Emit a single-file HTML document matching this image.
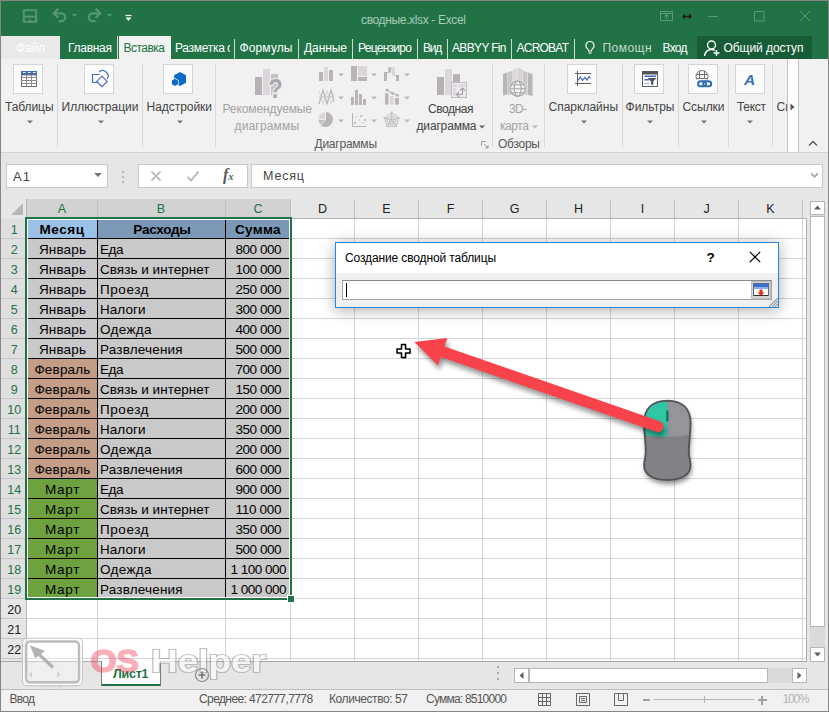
<!DOCTYPE html>
<html lang="ru"><head><meta charset="utf-8"><title>Excel</title><style>html,body{margin:0;padding:0}
body{width:829px;height:712px;overflow:hidden;position:relative;background:#e6e6e6;font-family:"Liberation Sans",sans-serif;}
.a{position:absolute;box-sizing:border-box}
.t{position:absolute;white-space:nowrap;display:block}
.c{position:absolute;white-space:nowrap;display:block;text-align:center}
</style></head><body>
<div class="a" style="left:0px;top:0px;width:829px;height:712px;background:#858585;"></div>
<div class="a" style="left:1px;top:1px;width:827px;height:710px;background:#e6e6e6;"></div>
<div class="a" style="left:1px;top:1px;width:827px;height:58px;background:#217346;"></div>
<span class="t" style="left:361px;top:12.3px;font-size:12px;line-height:16px;color:#aacbb7;letter-spacing:-0.35px;">сводные.xlsx - Excel</span>
<svg class="a" style="left:0;top:0" width="829" height="36" viewBox="0 0 829 36">
<g fill="none" stroke="#56976f" stroke-width="2">
<path d="M23.800 10.300h12.400v11.400h-12.400z"/><path d="M24 16.600h12"/><path d="M30 19.500v2.500"/>
</g>
<g fill="none" stroke="#56976f" stroke-width="2.200" stroke-linecap="butt" stroke-linejoin="miter">
<path d="M54 13.300h7.300a3.900 3.900 0 0 1 0 7.800h-2.800"/><path d="M58.300 8.800l-4.600 4.500 4.600 4.500"/>
<path d="M100 13.300h-7.300a3.900 3.900 0 0 0 0 7.800h2.800"/><path d="M95.700 8.800l4.600 4.500-4.600 4.500"/>
</g>
<path d="M72 14h5l-2.500 3z" fill="#56976f"/><path d="M107 14h5l-2.500 3z" fill="#56976f"/>
<path d="M125.5 15.500h6" stroke="#fff" stroke-width="1.200"/><path d="M125.500 17.500h6l-3 3.500z" fill="#fff"/>
<g fill="none" stroke="#5c9a78" stroke-width="1">
<path d="M660.5 11.500h12v9h-12z"/><path d="M660.5 13.500h12"/><path d="M666.5 19v-4.500M664.500 16.500l2-2 2 2"/>
<path d="M708 16.500h10"/><path d="M754.500 11.500h9.500v9.500h-9.500z"/><path d="M800 11l10 10M810 11l-10 10"/>
</g>
<path d="M682 16.500l3-3v2.300h4v-2.300l3 3-3 3v-2.300h-4v2.300z" fill="#1a1a1a"/>
</svg>
<div class="a" style="left:1px;top:36px;width:59px;height:23px;background:#e9e9e9;"></div>
<span class="t" style="left:16px;top:39.7px;font-size:12px;line-height:16px;color:#ffffff;letter-spacing:-0.17px;">Файл</span>
<span class="t" style="left:68px;top:39.7px;font-size:12px;line-height:16px;color:#fff;letter-spacing:-0.28px;">Главная</span>
<div class="a" style="left:117px;top:36px;width:1px;height:23px;background:#d4e3da;"></div>
<div class="a" style="left:119px;top:36px;width:52px;height:24px;background:#f1f1f1;"></div>
<span class="t" style="left:123.5px;top:39.7px;font-size:12px;line-height:16px;color:#217346;letter-spacing:-0.52px;">Вставка</span>
<span class="t" style="left:175px;top:39.7px;font-size:12px;line-height:16px;color:#fff;letter-spacing:-0.26px;">Разметка</span>
<span class="t" style="left:227px;top:39.7px;font-size:12px;line-height:16px;color:#fff;letter-spacing:-1.20px;width:3px;overflow:hidden;">с</span>
<div class="a" style="left:234px;top:39px;width:1px;height:20px;background:#c9ddd1;"></div>
<div class="a" style="left:298px;top:39px;width:1px;height:20px;background:#c9ddd1;"></div>
<div class="a" style="left:352px;top:39px;width:1px;height:20px;background:#c9ddd1;"></div>
<div class="a" style="left:417px;top:39px;width:1px;height:20px;background:#c9ddd1;"></div>
<div class="a" style="left:447px;top:39px;width:1px;height:20px;background:#c9ddd1;"></div>
<div class="a" style="left:511px;top:39px;width:1px;height:20px;background:#c9ddd1;"></div>
<div class="a" style="left:574px;top:39px;width:1px;height:20px;background:#c9ddd1;"></div>
<span class="t" style="left:239.5px;top:39.7px;font-size:12px;line-height:16px;color:#fff;letter-spacing:0.13px;">Формулы</span>
<span class="t" style="left:304px;top:39.7px;font-size:12px;line-height:16px;color:#fff;letter-spacing:-0.07px;">Данные</span>
<span class="t" style="left:358px;top:39.7px;font-size:12px;line-height:16px;color:#fff;letter-spacing:-0.72px;width:55px;overflow:hidden;">Рецензиро</span>
<span class="t" style="left:423px;top:39.7px;font-size:12px;line-height:16px;color:#fff;letter-spacing:-1.20px;">Вид</span>
<span class="t" style="left:452px;top:39.7px;font-size:12px;line-height:16px;color:#fff;letter-spacing:-0.66px;">ABBYY Fin</span>
<span class="t" style="left:516.5px;top:39.7px;font-size:12px;line-height:16px;color:#fff;letter-spacing:-0.77px;">ACROBAT</span>
<svg class="a" style="left:583px;top:39px" width="14" height="18" viewBox="0 0 14 18"><g fill="none" stroke="#fff" stroke-width="1.1"><path d="M7 2.500a4 4 0 0 0-2.300 7.300c.5.500.8 1.200.8 2.200h3c0-1 .3-1.700.8-2.200A4 4 0 0 0 7 2.500z"/><path d="M5.500 14h3"/></g></svg>
<span class="t" style="left:602.5px;top:39.7px;font-size:12px;line-height:16px;color:#c5dacd;letter-spacing:0.46px;">Помощн</span>
<span class="t" style="left:662.5px;top:39.7px;font-size:12px;line-height:16px;color:#fff;letter-spacing:-0.71px;">Вход</span>
<div class="a" style="left:697px;top:36px;width:115px;height:23px;background:#185c37;"></div>
<svg class="a" style="left:702px;top:38px" width="20" height="20" viewBox="0 0 20 20"><g fill="none" stroke="#fff" stroke-width="1.4"><circle cx="9.500" cy="7" r="4"/><path d="M2.500 18c.8-4.500 3.500-6.500 7-6.500 1.500 0 2.600.3 3.600 1"/><path d="M14.500 12v6M11.500 15h6"/></g></svg>
<span class="t" style="left:723.5px;top:39.7px;font-size:12px;line-height:16px;color:#fff;letter-spacing:-0.06px;">Общий доступ</span>
<div class="a" style="left:1px;top:59px;width:827px;height:93px;background:#f1f1f1;"></div>
<div class="a" style="left:1px;top:152px;width:827px;height:1px;background:#d4d4d4;"></div>
<div class="a" style="left:13px;top:64px;width:30px;height:30px;background:#fbfbfb;border:1px solid #d5d5d5;"></div>
<svg class="a" style="left:20px;top:70px" width="18" height="18" viewBox="20 70 18 18"><rect x="21.500" y="71.500" width="15" height="15" fill="#fff" stroke="#6e6e6e"/><path d="M21.500 77.500h15M21.500 80.500h15M21.500 83.500h15M26.500 75v11.500M31.500 75v11.500" stroke="#8a8a8a" fill="none"/><rect x="21" y="71" width="16" height="4" fill="#3f6bb5"/><path d="M23 72.500h2.500M28 72.500h2.500M33 72.500h2.500" stroke="#fff" stroke-width="1"/><path d="M21.500 75h15" stroke="#6e6e6e" stroke-width="0.800"/></svg>
<span class="t" style="left:5px;top:99.1px;font-size:12px;line-height:16px;color:#444;letter-spacing:-0.08px;">Таблицы</span>
<svg class="a" style="left:26.5px;top:120px" width="6" height="4" viewBox="0 0 6 4"><path d="M0 0.500h6l-3 3z" fill="#737373"/></svg>
<div class="a" style="left:57px;top:64px;width:1px;height:83px;background:#d8d8d8;"></div>
<div class="a" style="left:84px;top:64px;width:30px;height:30px;background:#fbfbfb;border:1px solid #d5d5d5;"></div>
<svg class="a" style="left:88px;top:68px" width="24" height="24" viewBox="88 68 24 24"><g fill="none" stroke="#3f6bb5" stroke-width="1.150"><path d="M99.500 74.500h-7v8h4.500"/><path d="M99 72a5.500 5.500 0 0 1 8.300 7"/><path d="M102 76.200l5.200 5.200-5.200 5.200-5.200-5.200z" fill="#fbfbfb"/></g></svg>
<span class="t" style="left:61.5px;top:99.1px;font-size:12px;line-height:16px;color:#444;letter-spacing:0.03px;">Иллюстрации</span>
<svg class="a" style="left:97.5px;top:120px" width="6" height="4" viewBox="0 0 6 4"><path d="M0 0.500h6l-3 3z" fill="#737373"/></svg>
<div class="a" style="left:142px;top:64px;width:1px;height:83px;background:#d8d8d8;"></div>
<div class="a" style="left:163px;top:64px;width:30px;height:30px;background:#fbfbfb;border:1px solid #d5d5d5;"></div>
<svg class="a" style="left:168px;top:68px" width="22" height="22" viewBox="168 68 22 22"><path d="M180 71.900L186 75.200V82.800L180 86L174.100 82.800V75.200Z" fill="#0b6cc8"/><path d="M175 78.800L178.100 80.600V84.200L175 86L171.900 84.200V80.600Z" fill="#0b6cc8" stroke="#fbfbfb" stroke-width="1.300" paint-order="stroke"/></svg>
<span class="t" style="left:146.5px;top:99.1px;font-size:12px;line-height:16px;color:#444;letter-spacing:-0.04px;">Надстройки</span>
<svg class="a" style="left:176.5px;top:120px" width="6" height="4" viewBox="0 0 6 4"><path d="M0 0.500h6l-3 3z" fill="#737373"/></svg>
<div class="a" style="left:215px;top:64px;width:1px;height:83px;background:#d8d8d8;"></div>
<svg class="a" style="left:254px;top:68px" width="30" height="31" viewBox="0 0 30 31"><rect x="1" y="9" width="7" height="18" fill="#b5b1b5"/><rect x="9" y="1" width="7" height="26" fill="#dcd6dc"/><rect x="17" y="6" width="7" height="21" fill="#c4c0c4"/><text x="14.200" y="29.700" textLength="14.500" lengthAdjust="spacingAndGlyphs" font-family="Liberation Sans,sans-serif" font-weight="bold" font-size="27" fill="#a9a7a9" stroke="#f1f1f1" stroke-width="2.200" paint-order="stroke">?</text></svg>
<span class="t" style="left:222.5px;top:101.0px;font-size:12px;line-height:16px;color:#a3a3a3;letter-spacing:-0.11px;">Рекомендуемые</span>
<span class="t" style="left:234.5px;top:117.5px;font-size:12px;line-height:16px;color:#a3a3a3;letter-spacing:0.16px;">диаграммы</span>
<svg class="a" style="left:317px;top:64px" width="95" height="68" viewBox="317 64 95 68">
<g>
<rect x="319" y="72" width="4" height="9" fill="#b8b4b8"/><rect x="324" y="67" width="4" height="14" fill="#dcd6dc"/><rect x="329" y="70" width="4" height="11" fill="#b8b4b8"/>
<rect x="351" y="66" width="6" height="15" fill="#b8b4b8"/><rect x="358" y="66" width="9" height="10" fill="#dcd6dc"/><rect x="358" y="77" width="9" height="4" fill="#b8b4b8"/>
<rect x="384" y="72" width="3" height="9" fill="#b8b4b8"/><rect x="388.300" y="67.300" width="2.800" height="5.400" fill="#b8b4b8"/><rect x="392" y="67.300" width="3" height="8.500" fill="#dcd6dc"/><rect x="396" y="75" width="3" height="6" fill="#b8b4b8"/><path d="M387 72.500h1.500M391 67.800h1M395 75.500h1" stroke="#b8b4b8" stroke-width="1"/>
<path d="M319 104l4-14 4 14 4-14 3 12" fill="none" stroke="#b8b4b8" stroke-width="1.100"/><path d="M319 91l4 13 4-13 4 13 3-11" fill="none" stroke="#dcd6dc" stroke-width="1.100"/><path d="M319 97h15" stroke="#b8b4b8" stroke-width="0.800"/>
<rect x="351" y="97" width="3" height="8" fill="#b8b4b8"/><rect x="355" y="90" width="3" height="15" fill="#b8b4b8"/><rect x="359" y="94" width="3" height="11" fill="#b8b4b8"/><rect x="363" y="99" width="3" height="6" fill="#b8b4b8"/>
<rect x="385" y="93.200" width="3.500" height="11.400" fill="#b8b4b8"/><rect x="390" y="96" width="4" height="8.600" fill="#dcd6dc"/><rect x="395" y="98" width="4" height="6.600" fill="#b8b4b8"/><path d="M386.900 90.100L392.600 93.200L397.400 95.200" fill="none" stroke="#b8b4b8" stroke-width="1.100"/><circle cx="386.900" cy="90.100" r="1.500" fill="#b8b4b8"/><circle cx="392.600" cy="93.200" r="1.500" fill="#b8b4b8"/><circle cx="397.400" cy="95.200" r="1.500" fill="#b8b4b8"/>
<circle cx="325.500" cy="119.500" r="7.500" fill="#b8b4b8"/><path d="M325.500 119.500v-7.500a7.500 7.500 0 0 0-7.500 7.500z" fill="#dcd6dc" stroke="#f1f1f1" stroke-width="0.900"/><path d="M325.500 119.500h-7.500a7.500 7.500 0 0 0 2.800 5.800z" fill="#c4c0c4" stroke="#f1f1f1" stroke-width="0.900"/>
<path d="M352.500 113v13.500h13.500" fill="none" stroke="#b8b4b8" stroke-width="1"/><g><rect x="355.200" y="116" width="1.700" height="1.700" fill="#dcd6dc"/><rect x="360.400" y="115.200" width="1.800" height="1.800" fill="#b8b4b8"/><rect x="358.200" y="119.200" width="1.700" height="1.700" fill="#dcd6dc"/><rect x="364.200" y="119.200" width="1.800" height="1.800" fill="#b8b4b8"/><rect x="354.200" y="122" width="1.800" height="1.800" fill="#b8b4b8"/><rect x="362.200" y="122" width="1.700" height="1.700" fill="#dcd6dc"/></g>
<g fill="none" stroke="#b8b4b8" stroke-width="0.900"><path d="M391.7 112.6L398.9 117.9L396.2 126.3L387.2 126.3L384.5 117.9Z"/><path d="M391.7 115.2L396.5 118.7L394.6 124.2L388.8 124.2L386.9 118.7Z"/><path d="M391.7 117.6L394.2 119.4L393.2 122.3L390.2 122.3L389.2 119.4Z" stroke-width="0.700"/><path d="M391.7 120.2L391.7 111.6M391.7 120.2L399.9 117.5M391.7 120.2L396.8 127.2M391.7 120.2L386.6 127.2M391.7 120.2L383.5 117.5"/></g>
</g></svg>
<svg class="a" style="left:337.5px;top:73px" width="6" height="4" viewBox="0 0 6 4"><path d="M0 0.500h6l-3 3z" fill="#b9b9b9"/></svg>
<svg class="a" style="left:337.5px;top:96px" width="6" height="4" viewBox="0 0 6 4"><path d="M0 0.500h6l-3 3z" fill="#b9b9b9"/></svg>
<svg class="a" style="left:337.5px;top:119px" width="6" height="4" viewBox="0 0 6 4"><path d="M0 0.500h6l-3 3z" fill="#b9b9b9"/></svg>
<svg class="a" style="left:370.5px;top:73px" width="6" height="4" viewBox="0 0 6 4"><path d="M0 0.500h6l-3 3z" fill="#b9b9b9"/></svg>
<svg class="a" style="left:370.5px;top:96px" width="6" height="4" viewBox="0 0 6 4"><path d="M0 0.500h6l-3 3z" fill="#b9b9b9"/></svg>
<svg class="a" style="left:370.5px;top:119px" width="6" height="4" viewBox="0 0 6 4"><path d="M0 0.500h6l-3 3z" fill="#b9b9b9"/></svg>
<svg class="a" style="left:403.5px;top:73px" width="6" height="4" viewBox="0 0 6 4"><path d="M0 0.500h6l-3 3z" fill="#b9b9b9"/></svg>
<svg class="a" style="left:403.5px;top:96px" width="6" height="4" viewBox="0 0 6 4"><path d="M0 0.500h6l-3 3z" fill="#b9b9b9"/></svg>
<svg class="a" style="left:403.5px;top:119px" width="6" height="4" viewBox="0 0 6 4"><path d="M0 0.500h6l-3 3z" fill="#b9b9b9"/></svg>
<span class="t" style="left:314.5px;top:135.5px;font-size:12px;line-height:16px;color:#5a5a5a;letter-spacing:-0.23px;">Диаграммы</span>
<svg class="a" style="left:436px;top:68px" width="33" height="31" viewBox="0 0 33 31"><rect x="1" y="9" width="7" height="18" fill="#b5b1b5"/><rect x="9" y="1" width="7" height="26" fill="#dcd6dc"/><rect x="17" y="6" width="7" height="14" fill="#b5b1b5"/><g transform="translate(-1,0)"><rect x="16.500" y="14.500" width="15" height="15" fill="#ebe9eb" stroke="#bfbbbf"/><path d="M18 17.500h4M23.500 17.500h6.500M19.500 20v7.500" stroke="#d6d2d6" stroke-width="2"/><path d="M21.500 26.500h6v-6.500M25 22.500l2.500-2.500 2.500 2.500M24 24l-2.500 2.500 2.500 2.500" fill="none" stroke="#a5a1a5" stroke-width="1.100"/></g></svg>
<span class="t" style="left:428px;top:101.0px;font-size:12px;line-height:16px;color:#444;letter-spacing:-0.44px;">Сводная</span>
<span class="t" style="left:416.5px;top:117.5px;font-size:12px;line-height:16px;color:#444;letter-spacing:-0.16px;">диаграмма</span>
<svg class="a" style="left:479px;top:124.5px" width="6" height="4" viewBox="0 0 6 4"><path d="M0 0.500h6l-3 3z" fill="#666"/></svg>
<svg class="a" style="left:481px;top:141px" width="8" height="8" viewBox="0 0 8 8"><path d="M0.500 5V0.500H5" fill="none" stroke="#9a9a9a"/><path d="M3 3l4 4M7 4v3H4" fill="none" stroke="#9a9a9a"/></svg>
<div class="a" style="left:492px;top:64px;width:1px;height:83px;background:#d8d8d8;"></div>
<svg class="a" style="left:502px;top:68px" width="32" height="31" viewBox="0 0 32 31"><path d="M1 6l4.500-1.500v22l-4.500 1z" fill="#b8b4b8"/><path d="M6 4l4.500-1v23l-4.500 1z" fill="#c8c4c8"/><path d="M11 1.500l4.500-1.500v25h-4.500z" fill="#dcd8dc"/><path d="M16 0l4.500 1.500v23.500h-4.500z" fill="#d4d0d4"/><path d="M21 3l4.500 1v23l-4.500-1z" fill="#c8c4c8"/><path d="M26 4.500l4.500 1.500v22l-4.500-1z" fill="#b8b4b8"/><circle cx="15.700" cy="20.700" r="8.800" fill="#f1f1f1"/><circle cx="15.700" cy="20.700" r="7.600" fill="#f1f1f1" stroke="#aaa6aa" stroke-width="1.300"/><ellipse cx="15.700" cy="20.700" rx="3.400" ry="7.600" fill="none" stroke="#aaa6aa" stroke-width="1.100"/><path d="M8 20.700h15.400M9.300 16.700h12.800M9.300 24.700h12.800" stroke="#aaa6aa" stroke-width="1.100"/></svg>
<span class="t" style="left:509px;top:101.0px;font-size:12px;line-height:16px;color:#a3a3a3;letter-spacing:-0.67px;">3D-</span>
<span class="t" style="left:500px;top:117.5px;font-size:12px;line-height:16px;color:#a3a3a3;letter-spacing:-0.41px;">карта</span>
<svg class="a" style="left:531.5px;top:124.5px" width="6" height="4" viewBox="0 0 6 4"><path d="M0 0.500h6l-3 3z" fill="#b9b9b9"/></svg>
<span class="t" style="left:498px;top:135.5px;font-size:12px;line-height:16px;color:#5a5a5a;letter-spacing:-0.26px;">Обзоры</span>
<div class="a" style="left:544px;top:64px;width:1px;height:83px;background:#d8d8d8;"></div>
<div class="a" style="left:567px;top:64px;width:30px;height:30px;background:#fbfbfb;border:1px solid #d5d5d5;"></div>
<svg class="a" style="left:573px;top:69px" width="20" height="20" viewBox="573 69 20 20"><path d="M575 73.500h16M575 83.500h16M577.500 71v15" stroke="#5e5e5e" fill="none"/><path d="M578 80.500l2.300-3.500 2.200 3.500 2.300-3 2.200 2.500 2.200-3.500 1.500 2" fill="none" stroke="#3f6bb5" stroke-width="1.200"/></svg>
<span class="t" style="left:548.5px;top:99.1px;font-size:12px;line-height:16px;color:#444;letter-spacing:-0.00px;">Спарклайны</span>
<svg class="a" style="left:580.5px;top:120px" width="6" height="4" viewBox="0 0 6 4"><path d="M0 0.500h6l-3 3z" fill="#737373"/></svg>
<div class="a" style="left:622px;top:64px;width:1px;height:83px;background:#d8d8d8;"></div>
<div class="a" style="left:634px;top:64px;width:30px;height:30px;background:#fbfbfb;border:1px solid #d5d5d5;"></div>
<svg class="a" style="left:640px;top:69px" width="20" height="20" viewBox="640 69 20 20"><rect x="642.500" y="71.500" width="15" height="15" fill="#fff" stroke="#5e5e5e"/><rect x="642" y="71" width="16" height="3.500" fill="#555"/><path d="M644.500 76.200h11.500M644.500 79.700h4.500" stroke="#3f6bb5" stroke-width="1.500"/><path d="M644.500 83.500h5" stroke="#a9c0e4" stroke-width="1.300"/><path d="M647.800 78h8.700l-3.200 3.400v3.400h-2.300v-3.400z" fill="#555"/></svg>
<span class="t" style="left:625.5px;top:99.1px;font-size:12px;line-height:16px;color:#444;letter-spacing:0.01px;">Фильтры</span>
<svg class="a" style="left:647px;top:120px" width="6" height="4" viewBox="0 0 6 4"><path d="M0 0.500h6l-3 3z" fill="#737373"/></svg>
<div class="a" style="left:678px;top:64px;width:1px;height:83px;background:#d8d8d8;"></div>
<div class="a" style="left:688px;top:64px;width:30px;height:30px;background:#fbfbfb;border:1px solid #d5d5d5;"></div>
<svg class="a" style="left:692px;top:68px" width="24" height="22" viewBox="692 68 24 22"><g fill="none" stroke="#707070" stroke-width="1"><circle cx="702" cy="76.500" r="6"/><path d="M696.500 74.500h11M696.200 78.500h11.600M699.500 71v8M704.500 71v8"/></g><rect x="696" y="79.500" width="17" height="8.500" fill="#fbfbfb"/><g fill="none" stroke="#2f6db5" stroke-width="2"><rect x="698" y="81.300" width="8" height="5" rx="2.500"/><rect x="703.200" y="81.300" width="8" height="5" rx="2.500"/></g></svg>
<span class="t" style="left:682.5px;top:99.1px;font-size:12px;line-height:16px;color:#444;letter-spacing:-0.05px;">Ссылки</span>
<svg class="a" style="left:700.5px;top:120px" width="6" height="4" viewBox="0 0 6 4"><path d="M0 0.500h6l-3 3z" fill="#737373"/></svg>
<div class="a" style="left:728px;top:64px;width:1px;height:83px;background:#d8d8d8;"></div>
<div class="a" style="left:735px;top:64px;width:30px;height:30px;background:#fbfbfb;border:1px solid #d5d5d5;"></div>
<svg class="a" style="left:741px;top:69px" width="18" height="20" viewBox="0 0 18 20"><text x="3" y="16" font-family="Liberation Sans,sans-serif" font-style="italic" font-weight="bold" font-size="15.500" fill="#3b73b9">A</text></svg>
<span class="t" style="left:737px;top:99.1px;font-size:12px;line-height:16px;color:#444;letter-spacing:-0.30px;">Текст</span>
<svg class="a" style="left:747px;top:120px" width="6" height="4" viewBox="0 0 6 4"><path d="M0 0.500h6l-3 3z" fill="#737373"/></svg>
<div class="a" style="left:772px;top:64px;width:1px;height:83px;background:#d8d8d8;"></div>
<span class="t" style="left:776.5px;top:99.1px;font-size:12px;line-height:16px;color:#444;letter-spacing:0.00px;width:10px;overflow:hidden;">Си</span>
<div class="a" style="left:787px;top:59px;width:12px;height:93px;background:#fdfdfd;border-left:1px solid #c4c4c4;border-right:1px solid #c4c4c4;"></div>
<svg class="a" style="left:790px;top:103px" width="5" height="8" viewBox="0 0 5 8"><path d="M0.500 0.500l4 3.500-4 3.500z" fill="#555"/></svg>
<svg class="a" style="left:808px;top:140px" width="10" height="7" viewBox="0 0 10 7"><path d="M1 5.500l4-4 4 4" fill="none" stroke="#555" stroke-width="1.400"/></svg>
<div class="a" style="left:6px;top:164px;width:102px;height:24px;background:#fff;border:1px solid #c9c9c9;"></div>
<span class="t" style="left:13px;top:167.5px;font-size:13px;line-height:17px;color:#444;letter-spacing:1.10px;">A1</span>
<svg class="a" style="left:94px;top:173px" width="8" height="4" viewBox="0 0 8 4"><path d="M0 0h8l-4 4z" fill="#777"/></svg>
<div class="a" style="left:122px;top:171px;width:2px;height:2px;background:#b5b5b5;"></div>
<div class="a" style="left:122px;top:176px;width:2px;height:2px;background:#b5b5b5;"></div>
<div class="a" style="left:122px;top:181px;width:2px;height:2px;background:#b5b5b5;"></div>
<div class="a" style="left:138px;top:164px;width:110px;height:24px;background:#fff;border:1px solid #c9c9c9;"></div>
<svg class="a" style="left:150px;top:170px" width="12" height="12" viewBox="0 0 12 12"><path d="M1.500 1.500l9 9M10.500 1.500l-9 9" stroke="#bdbdbd" stroke-width="1.800" fill="none"/></svg>
<svg class="a" style="left:186px;top:170px" width="14" height="12" viewBox="0 0 14 12"><path d="M1.500 7l3.500 3.500 7.500-9" stroke="#bdbdbd" stroke-width="2" fill="none"/></svg>
<span class="t" style="left:223px;top:166px;font-family:'Liberation Serif',serif;font-style:italic;font-weight:bold;font-size:16px;line-height:18px;color:#5a5a5a">f<span style="font-size:10.5px">x</span></span>
<div class="a" style="left:251px;top:164px;width:572px;height:24px;background:#fff;border:1px solid #c9c9c9;"></div>
<span class="t" style="left:263px;top:167.8px;font-size:12.5px;line-height:16.5px;color:#444;letter-spacing:0.83px;">Месяц</span>
<svg class="a" style="left:810px;top:172px" width="9" height="7" viewBox="0 0 9 7"><path d="M1.200 1.500l3.300 3.300 3.300-3.300" fill="none" stroke="#a6a6a6" stroke-width="1.800"/></svg>
<div class="a" style="left:27px;top:219px;width:779px;height:442px;background:#fff;"></div>
<div class="a" style="left:27px;top:199px;width:264px;height:18px;background:#d2d2d2;"></div>
<div class="a" style="left:1px;top:219px;width:25px;height:380px;background:#dfdfdf;"></div>
<div class="a" style="left:1px;top:599px;width:25px;height:62px;background:#e6e6e6;"></div>
<svg class="a" style="left:8px;top:203px" width="16" height="13" viewBox="0 0 16 13"><path d="M15 0v12H3z" fill="#b8b8b8"/></svg>
<div class="a" style="left:292px;top:218px;width:515px;height:1px;background:#b4b4b4;"></div>
<div class="a" style="left:26px;top:599px;width:1px;height:62px;background:#b4b4b4;"></div>
<div class="a" style="left:26px;top:199px;width:1px;height:18px;background:#b4b4b4;"></div>
<div class="a" style="left:97px;top:200px;width:1px;height:18px;background:#c2c2c2;"></div>
<div class="a" style="left:225px;top:200px;width:1px;height:18px;background:#c2c2c2;"></div>
<div class="a" style="left:290px;top:200px;width:1px;height:18px;background:#c2c2c2;"></div>
<div class="a" style="left:290px;top:219px;width:1px;height:442px;background:#d4d4d4;"></div>
<div class="a" style="left:354px;top:200px;width:1px;height:18px;background:#c2c2c2;"></div>
<div class="a" style="left:354px;top:219px;width:1px;height:442px;background:#d4d4d4;"></div>
<div class="a" style="left:418px;top:200px;width:1px;height:18px;background:#c2c2c2;"></div>
<div class="a" style="left:418px;top:219px;width:1px;height:442px;background:#d4d4d4;"></div>
<div class="a" style="left:482px;top:200px;width:1px;height:18px;background:#c2c2c2;"></div>
<div class="a" style="left:482px;top:219px;width:1px;height:442px;background:#d4d4d4;"></div>
<div class="a" style="left:546px;top:200px;width:1px;height:18px;background:#c2c2c2;"></div>
<div class="a" style="left:546px;top:219px;width:1px;height:442px;background:#d4d4d4;"></div>
<div class="a" style="left:610px;top:200px;width:1px;height:18px;background:#c2c2c2;"></div>
<div class="a" style="left:610px;top:219px;width:1px;height:442px;background:#d4d4d4;"></div>
<div class="a" style="left:674px;top:200px;width:1px;height:18px;background:#c2c2c2;"></div>
<div class="a" style="left:674px;top:219px;width:1px;height:442px;background:#d4d4d4;"></div>
<div class="a" style="left:738px;top:200px;width:1px;height:18px;background:#c2c2c2;"></div>
<div class="a" style="left:738px;top:219px;width:1px;height:442px;background:#d4d4d4;"></div>
<div class="a" style="left:802px;top:200px;width:1px;height:18px;background:#c2c2c2;"></div>
<div class="a" style="left:802px;top:219px;width:1px;height:442px;background:#d4d4d4;"></div>
<div class="a" style="left:97px;top:599px;width:1px;height:62px;background:#d4d4d4;"></div>
<div class="a" style="left:225px;top:599px;width:1px;height:62px;background:#d4d4d4;"></div>
<div class="a" style="left:1px;top:238px;width:25px;height:1px;background:#c6c6c6;"></div>
<div class="a" style="left:292px;top:238px;width:514px;height:1px;background:#d4d4d4;"></div>
<div class="a" style="left:1px;top:258px;width:25px;height:1px;background:#c6c6c6;"></div>
<div class="a" style="left:292px;top:258px;width:514px;height:1px;background:#d4d4d4;"></div>
<div class="a" style="left:1px;top:278px;width:25px;height:1px;background:#c6c6c6;"></div>
<div class="a" style="left:292px;top:278px;width:514px;height:1px;background:#d4d4d4;"></div>
<div class="a" style="left:1px;top:298px;width:25px;height:1px;background:#c6c6c6;"></div>
<div class="a" style="left:292px;top:298px;width:514px;height:1px;background:#d4d4d4;"></div>
<div class="a" style="left:1px;top:318px;width:25px;height:1px;background:#c6c6c6;"></div>
<div class="a" style="left:292px;top:318px;width:514px;height:1px;background:#d4d4d4;"></div>
<div class="a" style="left:1px;top:338px;width:25px;height:1px;background:#c6c6c6;"></div>
<div class="a" style="left:292px;top:338px;width:514px;height:1px;background:#d4d4d4;"></div>
<div class="a" style="left:1px;top:358px;width:25px;height:1px;background:#c6c6c6;"></div>
<div class="a" style="left:292px;top:358px;width:514px;height:1px;background:#d4d4d4;"></div>
<div class="a" style="left:1px;top:378px;width:25px;height:1px;background:#c6c6c6;"></div>
<div class="a" style="left:292px;top:378px;width:514px;height:1px;background:#d4d4d4;"></div>
<div class="a" style="left:1px;top:398px;width:25px;height:1px;background:#c6c6c6;"></div>
<div class="a" style="left:292px;top:398px;width:514px;height:1px;background:#d4d4d4;"></div>
<div class="a" style="left:1px;top:418px;width:25px;height:1px;background:#c6c6c6;"></div>
<div class="a" style="left:292px;top:418px;width:514px;height:1px;background:#d4d4d4;"></div>
<div class="a" style="left:1px;top:438px;width:25px;height:1px;background:#c6c6c6;"></div>
<div class="a" style="left:292px;top:438px;width:514px;height:1px;background:#d4d4d4;"></div>
<div class="a" style="left:1px;top:458px;width:25px;height:1px;background:#c6c6c6;"></div>
<div class="a" style="left:292px;top:458px;width:514px;height:1px;background:#d4d4d4;"></div>
<div class="a" style="left:1px;top:478px;width:25px;height:1px;background:#c6c6c6;"></div>
<div class="a" style="left:292px;top:478px;width:514px;height:1px;background:#d4d4d4;"></div>
<div class="a" style="left:1px;top:498px;width:25px;height:1px;background:#c6c6c6;"></div>
<div class="a" style="left:292px;top:498px;width:514px;height:1px;background:#d4d4d4;"></div>
<div class="a" style="left:1px;top:518px;width:25px;height:1px;background:#c6c6c6;"></div>
<div class="a" style="left:292px;top:518px;width:514px;height:1px;background:#d4d4d4;"></div>
<div class="a" style="left:1px;top:538px;width:25px;height:1px;background:#c6c6c6;"></div>
<div class="a" style="left:292px;top:538px;width:514px;height:1px;background:#d4d4d4;"></div>
<div class="a" style="left:1px;top:558px;width:25px;height:1px;background:#c6c6c6;"></div>
<div class="a" style="left:292px;top:558px;width:514px;height:1px;background:#d4d4d4;"></div>
<div class="a" style="left:1px;top:578px;width:25px;height:1px;background:#c6c6c6;"></div>
<div class="a" style="left:292px;top:578px;width:514px;height:1px;background:#d4d4d4;"></div>
<div class="a" style="left:1px;top:598px;width:25px;height:1px;background:#c6c6c6;"></div>
<div class="a" style="left:27px;top:598px;width:779px;height:1px;background:#d4d4d4;"></div>
<div class="a" style="left:1px;top:618px;width:25px;height:1px;background:#c6c6c6;"></div>
<div class="a" style="left:27px;top:618px;width:779px;height:1px;background:#d4d4d4;"></div>
<div class="a" style="left:1px;top:638px;width:25px;height:1px;background:#c6c6c6;"></div>
<div class="a" style="left:27px;top:638px;width:779px;height:1px;background:#d4d4d4;"></div>
<div class="a" style="left:1px;top:658px;width:25px;height:1px;background:#c6c6c6;"></div>
<div class="a" style="left:27px;top:658px;width:779px;height:1px;background:#d4d4d4;"></div>
<div class="a" style="left:806px;top:218px;width:1px;height:444px;background:#b0b0b0;"></div>
<div class="a" style="left:1px;top:661px;width:806px;height:1px;background:#a6a6a6;"></div>
<span class="c" style="left:52px;width:20px;top:200px;font-size:12.5px;line-height:18px;color:#217346">A</span>
<span class="c" style="left:151px;width:20px;top:200px;font-size:12.5px;line-height:18px;color:#217346">B</span>
<span class="c" style="left:248px;width:20px;top:200px;font-size:12.5px;line-height:18px;color:#217346">C</span>
<span class="c" style="left:312.5px;width:20px;top:200px;font-size:12.5px;line-height:18px;color:#222">D</span>
<span class="c" style="left:376.5px;width:20px;top:200px;font-size:12.5px;line-height:18px;color:#222">E</span>
<span class="c" style="left:440.5px;width:20px;top:200px;font-size:12.5px;line-height:18px;color:#222">F</span>
<span class="c" style="left:504.5px;width:20px;top:200px;font-size:12.5px;line-height:18px;color:#222">G</span>
<span class="c" style="left:568.5px;width:20px;top:200px;font-size:12.5px;line-height:18px;color:#222">H</span>
<span class="c" style="left:632.5px;width:20px;top:200px;font-size:12.5px;line-height:18px;color:#222">I</span>
<span class="c" style="left:696.5px;width:20px;top:200px;font-size:12.5px;line-height:18px;color:#222">J</span>
<span class="c" style="left:760.5px;width:20px;top:200px;font-size:12.5px;line-height:18px;color:#222">K</span>
<span class="c" style="left:1.7px;width:25px;top:221px;font-size:12.5px;line-height:18px;color:#217346">1</span>
<span class="c" style="left:1.7px;width:25px;top:241px;font-size:12.5px;line-height:18px;color:#217346">2</span>
<span class="c" style="left:1.7px;width:25px;top:261px;font-size:12.5px;line-height:18px;color:#217346">3</span>
<span class="c" style="left:1.7px;width:25px;top:281px;font-size:12.5px;line-height:18px;color:#217346">4</span>
<span class="c" style="left:1.7px;width:25px;top:301px;font-size:12.5px;line-height:18px;color:#217346">5</span>
<span class="c" style="left:1.7px;width:25px;top:321px;font-size:12.5px;line-height:18px;color:#217346">6</span>
<span class="c" style="left:1.7px;width:25px;top:341px;font-size:12.5px;line-height:18px;color:#217346">7</span>
<span class="c" style="left:1.7px;width:25px;top:361px;font-size:12.5px;line-height:18px;color:#217346">8</span>
<span class="c" style="left:1.7px;width:25px;top:381px;font-size:12.5px;line-height:18px;color:#217346">9</span>
<span class="c" style="left:1.7px;width:25px;top:401px;font-size:12.5px;line-height:18px;color:#217346">10</span>
<span class="c" style="left:1.7px;width:25px;top:421px;font-size:12.5px;line-height:18px;color:#217346">11</span>
<span class="c" style="left:1.7px;width:25px;top:441px;font-size:12.5px;line-height:18px;color:#217346">12</span>
<span class="c" style="left:1.7px;width:25px;top:461px;font-size:12.5px;line-height:18px;color:#217346">13</span>
<span class="c" style="left:1.7px;width:25px;top:481px;font-size:12.5px;line-height:18px;color:#217346">14</span>
<span class="c" style="left:1.7px;width:25px;top:501px;font-size:12.5px;line-height:18px;color:#217346">15</span>
<span class="c" style="left:1.7px;width:25px;top:521px;font-size:12.5px;line-height:18px;color:#217346">16</span>
<span class="c" style="left:1.7px;width:25px;top:541px;font-size:12.5px;line-height:18px;color:#217346">17</span>
<span class="c" style="left:1.7px;width:25px;top:561px;font-size:12.5px;line-height:18px;color:#217346">18</span>
<span class="c" style="left:1.7px;width:25px;top:581px;font-size:12.5px;line-height:18px;color:#217346">19</span>
<span class="c" style="left:1.7px;width:25px;top:601px;font-size:12.5px;line-height:18px;color:#222">20</span>
<span class="c" style="left:1.7px;width:25px;top:621px;font-size:12.5px;line-height:18px;color:#222">21</span>
<span class="c" style="left:1.7px;width:25px;top:641px;font-size:12.5px;line-height:18px;color:#222">22</span>
<div class="a" style="left:28px;top:220px;width:69px;height:18px;background:#9bc2e6;"></div>
<div class="a" style="left:98px;top:220px;width:127px;height:18px;background:#7b99b7;"></div>
<div class="a" style="left:226px;top:220px;width:63px;height:18px;background:#7b99b7;"></div>
<div class="a" style="left:28px;top:239px;width:69px;height:19px;background:#c9c9c9;"></div>
<div class="a" style="left:98px;top:239px;width:127px;height:19px;background:#c9c9c9;"></div>
<div class="a" style="left:226px;top:239px;width:63px;height:19px;background:#c9c9c9;"></div>
<div class="a" style="left:28px;top:259px;width:69px;height:19px;background:#c9c9c9;"></div>
<div class="a" style="left:98px;top:259px;width:127px;height:19px;background:#c9c9c9;"></div>
<div class="a" style="left:226px;top:259px;width:63px;height:19px;background:#c9c9c9;"></div>
<div class="a" style="left:28px;top:279px;width:69px;height:19px;background:#c9c9c9;"></div>
<div class="a" style="left:98px;top:279px;width:127px;height:19px;background:#c9c9c9;"></div>
<div class="a" style="left:226px;top:279px;width:63px;height:19px;background:#c9c9c9;"></div>
<div class="a" style="left:28px;top:299px;width:69px;height:19px;background:#c9c9c9;"></div>
<div class="a" style="left:98px;top:299px;width:127px;height:19px;background:#c9c9c9;"></div>
<div class="a" style="left:226px;top:299px;width:63px;height:19px;background:#c9c9c9;"></div>
<div class="a" style="left:28px;top:319px;width:69px;height:19px;background:#c9c9c9;"></div>
<div class="a" style="left:98px;top:319px;width:127px;height:19px;background:#c9c9c9;"></div>
<div class="a" style="left:226px;top:319px;width:63px;height:19px;background:#c9c9c9;"></div>
<div class="a" style="left:28px;top:339px;width:69px;height:19px;background:#c9c9c9;"></div>
<div class="a" style="left:98px;top:339px;width:127px;height:19px;background:#c9c9c9;"></div>
<div class="a" style="left:226px;top:339px;width:63px;height:19px;background:#c9c9c9;"></div>
<div class="a" style="left:28px;top:359px;width:69px;height:19px;background:#c49d87;"></div>
<div class="a" style="left:98px;top:359px;width:127px;height:19px;background:#c9c9c9;"></div>
<div class="a" style="left:226px;top:359px;width:63px;height:19px;background:#c9c9c9;"></div>
<div class="a" style="left:28px;top:379px;width:69px;height:19px;background:#c49d87;"></div>
<div class="a" style="left:98px;top:379px;width:127px;height:19px;background:#c9c9c9;"></div>
<div class="a" style="left:226px;top:379px;width:63px;height:19px;background:#c9c9c9;"></div>
<div class="a" style="left:28px;top:399px;width:69px;height:19px;background:#c49d87;"></div>
<div class="a" style="left:98px;top:399px;width:127px;height:19px;background:#c9c9c9;"></div>
<div class="a" style="left:226px;top:399px;width:63px;height:19px;background:#c9c9c9;"></div>
<div class="a" style="left:28px;top:419px;width:69px;height:19px;background:#c49d87;"></div>
<div class="a" style="left:98px;top:419px;width:127px;height:19px;background:#c9c9c9;"></div>
<div class="a" style="left:226px;top:419px;width:63px;height:19px;background:#c9c9c9;"></div>
<div class="a" style="left:28px;top:439px;width:69px;height:19px;background:#c49d87;"></div>
<div class="a" style="left:98px;top:439px;width:127px;height:19px;background:#c9c9c9;"></div>
<div class="a" style="left:226px;top:439px;width:63px;height:19px;background:#c9c9c9;"></div>
<div class="a" style="left:28px;top:459px;width:69px;height:19px;background:#c49d87;"></div>
<div class="a" style="left:98px;top:459px;width:127px;height:19px;background:#c9c9c9;"></div>
<div class="a" style="left:226px;top:459px;width:63px;height:19px;background:#c9c9c9;"></div>
<div class="a" style="left:28px;top:479px;width:69px;height:19px;background:#6ea23f;"></div>
<div class="a" style="left:98px;top:479px;width:127px;height:19px;background:#c9c9c9;"></div>
<div class="a" style="left:226px;top:479px;width:63px;height:19px;background:#c9c9c9;"></div>
<div class="a" style="left:28px;top:499px;width:69px;height:19px;background:#6ea23f;"></div>
<div class="a" style="left:98px;top:499px;width:127px;height:19px;background:#c9c9c9;"></div>
<div class="a" style="left:226px;top:499px;width:63px;height:19px;background:#c9c9c9;"></div>
<div class="a" style="left:28px;top:519px;width:69px;height:19px;background:#6ea23f;"></div>
<div class="a" style="left:98px;top:519px;width:127px;height:19px;background:#c9c9c9;"></div>
<div class="a" style="left:226px;top:519px;width:63px;height:19px;background:#c9c9c9;"></div>
<div class="a" style="left:28px;top:539px;width:69px;height:19px;background:#6ea23f;"></div>
<div class="a" style="left:98px;top:539px;width:127px;height:19px;background:#c9c9c9;"></div>
<div class="a" style="left:226px;top:539px;width:63px;height:19px;background:#c9c9c9;"></div>
<div class="a" style="left:28px;top:559px;width:69px;height:19px;background:#6ea23f;"></div>
<div class="a" style="left:98px;top:559px;width:127px;height:19px;background:#c9c9c9;"></div>
<div class="a" style="left:226px;top:559px;width:63px;height:19px;background:#c9c9c9;"></div>
<div class="a" style="left:28px;top:579px;width:69px;height:18px;background:#6ea23f;"></div>
<div class="a" style="left:98px;top:579px;width:127px;height:18px;background:#c9c9c9;"></div>
<div class="a" style="left:226px;top:579px;width:63px;height:18px;background:#c9c9c9;"></div>
<div class="a" style="left:28px;top:238px;width:261px;height:1px;background:#000;"></div>
<div class="a" style="left:28px;top:258px;width:261px;height:1px;background:#000;"></div>
<div class="a" style="left:28px;top:278px;width:261px;height:1px;background:#000;"></div>
<div class="a" style="left:28px;top:298px;width:261px;height:1px;background:#000;"></div>
<div class="a" style="left:28px;top:318px;width:261px;height:1px;background:#000;"></div>
<div class="a" style="left:28px;top:338px;width:261px;height:1px;background:#000;"></div>
<div class="a" style="left:28px;top:358px;width:261px;height:1px;background:#000;"></div>
<div class="a" style="left:28px;top:378px;width:261px;height:1px;background:#000;"></div>
<div class="a" style="left:28px;top:398px;width:261px;height:1px;background:#000;"></div>
<div class="a" style="left:28px;top:418px;width:261px;height:1px;background:#000;"></div>
<div class="a" style="left:28px;top:438px;width:261px;height:1px;background:#000;"></div>
<div class="a" style="left:28px;top:458px;width:261px;height:1px;background:#000;"></div>
<div class="a" style="left:28px;top:478px;width:261px;height:1px;background:#000;"></div>
<div class="a" style="left:28px;top:498px;width:261px;height:1px;background:#000;"></div>
<div class="a" style="left:28px;top:518px;width:261px;height:1px;background:#000;"></div>
<div class="a" style="left:28px;top:538px;width:261px;height:1px;background:#000;"></div>
<div class="a" style="left:28px;top:558px;width:261px;height:1px;background:#000;"></div>
<div class="a" style="left:28px;top:578px;width:261px;height:1px;background:#000;"></div>
<div class="a" style="left:97px;top:220px;width:1px;height:377px;background:#000;"></div>
<div class="a" style="left:225px;top:220px;width:1px;height:377px;background:#000;"></div>
<span class="c" style="left:2px;width:120px;top:220.5px;font-size:13.5px;line-height:18px;color:#000;font-weight:bold;letter-spacing:0.56px;">Месяц</span>
<span class="c" style="left:102px;width:120px;top:220.5px;font-size:13.5px;line-height:18px;color:#000;font-weight:bold;letter-spacing:-0.25px;">Расходы</span>
<span class="c" style="left:198px;width:120px;top:220.5px;font-size:13.5px;line-height:18px;color:#000;font-weight:bold;letter-spacing:0.28px;">Сумма</span>
<span class="c" style="left:2.5px;width:120px;top:240.5px;font-size:13.5px;line-height:18px;color:#000;letter-spacing:0.15px;">Январь</span>
<span class="t" style="left:100px;top:240.8px;font-size:13.5px;line-height:17.5px;color:#000;letter-spacing:-0.44px;">Еда</span>
<span class="t" style="left:235.5px;top:240.8px;font-size:13.5px;line-height:17.5px;color:#000;letter-spacing:-0.47px;">800 000</span>
<span class="c" style="left:2.5px;width:120px;top:260.5px;font-size:13.5px;line-height:18px;color:#000;letter-spacing:0.15px;">Январь</span>
<span class="t" style="left:100px;top:260.8px;font-size:13.5px;line-height:17.5px;color:#000;letter-spacing:0.03px;">Связь и интернет</span>
<span class="t" style="left:235.5px;top:260.8px;font-size:13.5px;line-height:17.5px;color:#000;letter-spacing:-0.47px;">100 000</span>
<span class="c" style="left:2.5px;width:120px;top:280.5px;font-size:13.5px;line-height:18px;color:#000;letter-spacing:0.15px;">Январь</span>
<span class="t" style="left:100px;top:280.8px;font-size:13.5px;line-height:17.5px;color:#000;letter-spacing:0.56px;">Проезд</span>
<span class="t" style="left:235.5px;top:280.8px;font-size:13.5px;line-height:17.5px;color:#000;letter-spacing:-0.47px;">250 000</span>
<span class="c" style="left:2.5px;width:120px;top:300.5px;font-size:13.5px;line-height:18px;color:#000;letter-spacing:0.15px;">Январь</span>
<span class="t" style="left:100px;top:300.8px;font-size:13.5px;line-height:17.5px;color:#000;letter-spacing:0.05px;">Налоги</span>
<span class="t" style="left:235.5px;top:300.8px;font-size:13.5px;line-height:17.5px;color:#000;letter-spacing:-0.47px;">300 000</span>
<span class="c" style="left:2.5px;width:120px;top:320.5px;font-size:13.5px;line-height:18px;color:#000;letter-spacing:0.15px;">Январь</span>
<span class="t" style="left:100px;top:320.8px;font-size:13.5px;line-height:17.5px;color:#000;letter-spacing:0.33px;">Одежда</span>
<span class="t" style="left:235.5px;top:320.8px;font-size:13.5px;line-height:17.5px;color:#000;letter-spacing:-0.47px;">400 000</span>
<span class="c" style="left:2.5px;width:120px;top:340.5px;font-size:13.5px;line-height:18px;color:#000;letter-spacing:0.15px;">Январь</span>
<span class="t" style="left:100px;top:340.8px;font-size:13.5px;line-height:17.5px;color:#000;letter-spacing:0.18px;">Развлечения</span>
<span class="t" style="left:235.5px;top:340.8px;font-size:13.5px;line-height:17.5px;color:#000;letter-spacing:-0.47px;">500 000</span>
<span class="c" style="left:2.5px;width:120px;top:360.5px;font-size:13.5px;line-height:18px;color:#000;letter-spacing:0.19px;">Февраль</span>
<span class="t" style="left:100px;top:360.8px;font-size:13.5px;line-height:17.5px;color:#000;letter-spacing:-0.44px;">Еда</span>
<span class="t" style="left:235.5px;top:360.8px;font-size:13.5px;line-height:17.5px;color:#000;letter-spacing:-0.47px;">700 000</span>
<span class="c" style="left:2.5px;width:120px;top:380.5px;font-size:13.5px;line-height:18px;color:#000;letter-spacing:0.19px;">Февраль</span>
<span class="t" style="left:100px;top:380.8px;font-size:13.5px;line-height:17.5px;color:#000;letter-spacing:0.03px;">Связь и интернет</span>
<span class="t" style="left:235.5px;top:380.8px;font-size:13.5px;line-height:17.5px;color:#000;letter-spacing:-0.47px;">150 000</span>
<span class="c" style="left:2.5px;width:120px;top:400.5px;font-size:13.5px;line-height:18px;color:#000;letter-spacing:0.19px;">Февраль</span>
<span class="t" style="left:100px;top:400.8px;font-size:13.5px;line-height:17.5px;color:#000;letter-spacing:0.56px;">Проезд</span>
<span class="t" style="left:235.5px;top:400.8px;font-size:13.5px;line-height:17.5px;color:#000;letter-spacing:-0.47px;">200 000</span>
<span class="c" style="left:2.5px;width:120px;top:420.5px;font-size:13.5px;line-height:18px;color:#000;letter-spacing:0.19px;">Февраль</span>
<span class="t" style="left:100px;top:420.8px;font-size:13.5px;line-height:17.5px;color:#000;letter-spacing:0.05px;">Налоги</span>
<span class="t" style="left:235.5px;top:420.8px;font-size:13.5px;line-height:17.5px;color:#000;letter-spacing:-0.47px;">350 000</span>
<span class="c" style="left:2.5px;width:120px;top:440.5px;font-size:13.5px;line-height:18px;color:#000;letter-spacing:0.19px;">Февраль</span>
<span class="t" style="left:100px;top:440.8px;font-size:13.5px;line-height:17.5px;color:#000;letter-spacing:0.33px;">Одежда</span>
<span class="t" style="left:235.5px;top:440.8px;font-size:13.5px;line-height:17.5px;color:#000;letter-spacing:-0.47px;">200 000</span>
<span class="c" style="left:2.5px;width:120px;top:460.5px;font-size:13.5px;line-height:18px;color:#000;letter-spacing:0.19px;">Февраль</span>
<span class="t" style="left:100px;top:460.8px;font-size:13.5px;line-height:17.5px;color:#000;letter-spacing:0.18px;">Развлечения</span>
<span class="t" style="left:235.5px;top:460.8px;font-size:13.5px;line-height:17.5px;color:#000;letter-spacing:-0.47px;">600 000</span>
<span class="c" style="left:2.5px;width:120px;top:480.5px;font-size:13.5px;line-height:18px;color:#000;letter-spacing:0.73px;">Март</span>
<span class="t" style="left:100px;top:480.8px;font-size:13.5px;line-height:17.5px;color:#000;letter-spacing:-0.44px;">Еда</span>
<span class="t" style="left:235.5px;top:480.8px;font-size:13.5px;line-height:17.5px;color:#000;letter-spacing:-0.47px;">900 000</span>
<span class="c" style="left:2.5px;width:120px;top:500.5px;font-size:13.5px;line-height:18px;color:#000;letter-spacing:0.73px;">Март</span>
<span class="t" style="left:100px;top:500.8px;font-size:13.5px;line-height:17.5px;color:#000;letter-spacing:0.03px;">Связь и интернет</span>
<span class="t" style="left:235.5px;top:500.8px;font-size:13.5px;line-height:17.5px;color:#000;letter-spacing:-0.30px;">110 000</span>
<span class="c" style="left:2.5px;width:120px;top:520.5px;font-size:13.5px;line-height:18px;color:#000;letter-spacing:0.73px;">Март</span>
<span class="t" style="left:100px;top:520.8px;font-size:13.5px;line-height:17.5px;color:#000;letter-spacing:0.56px;">Проезд</span>
<span class="t" style="left:235.5px;top:520.8px;font-size:13.5px;line-height:17.5px;color:#000;letter-spacing:-0.47px;">350 000</span>
<span class="c" style="left:2.5px;width:120px;top:540.5px;font-size:13.5px;line-height:18px;color:#000;letter-spacing:0.73px;">Март</span>
<span class="t" style="left:100px;top:540.8px;font-size:13.5px;line-height:17.5px;color:#000;letter-spacing:0.05px;">Налоги</span>
<span class="t" style="left:235.5px;top:540.8px;font-size:13.5px;line-height:17.5px;color:#000;letter-spacing:-0.47px;">500 000</span>
<span class="c" style="left:2.5px;width:120px;top:560.5px;font-size:13.5px;line-height:18px;color:#000;letter-spacing:0.73px;">Март</span>
<span class="t" style="left:100px;top:560.8px;font-size:13.5px;line-height:17.5px;color:#000;letter-spacing:0.33px;">Одежда</span>
<span class="t" style="left:230.5px;top:560.8px;font-size:13.5px;line-height:17.5px;color:#000;letter-spacing:-0.51px;">1 100 000</span>
<span class="c" style="left:2.5px;width:120px;top:580.5px;font-size:13.5px;line-height:18px;color:#000;letter-spacing:0.73px;">Март</span>
<span class="t" style="left:100px;top:580.8px;font-size:13.5px;line-height:17.5px;color:#000;letter-spacing:0.18px;">Развлечения</span>
<span class="t" style="left:230.5px;top:580.8px;font-size:13.5px;line-height:17.5px;color:#000;letter-spacing:-0.51px;">1 000 000</span>
<div class="a" style="left:25px;top:217px;width:267px;height:2px;background:#217346;"></div>
<div class="a" style="left:25px;top:217px;width:2px;height:383px;background:#217346;"></div>
<div class="a" style="left:290px;top:217px;width:2px;height:380px;background:#217346;"></div>
<div class="a" style="left:25px;top:598px;width:263px;height:2px;background:#217346;"></div>
<div class="a" style="left:288px;top:596px;width:6px;height:6px;background:#217346;border:1px solid #fff;box-sizing:content-box;left:287px;top:595px;"></div>
<div class="a" style="left:335px;top:242px;width:444px;height:66px;background:#f0f0f0;border:1px solid #2487d9;box-shadow:0 2px 14px rgba(0,0,0,0.330);"></div>
<div class="a" style="left:336px;top:243px;width:442px;height:30px;background:#fff;"></div>
<span class="t" style="left:345px;top:250.0px;font-size:12px;line-height:16px;color:#000;letter-spacing:-0.13px;">Создание сводной таблицы</span>
<span class="t" style="left:706.5px;top:248.8px;font-size:13.5px;line-height:17.5px;color:#000;letter-spacing:0.00px;font-weight:bold;">?</span>
<svg class="a" style="left:749px;top:251px" width="12" height="12" viewBox="0 0 12 12"><path d="M0.800 0.800l10.400 10.400M11.200 0.800L0.800 11.200" stroke="#000" stroke-width="1.200" fill="none"/></svg>
<div class="a" style="left:342px;top:280px;width:430px;height:20px;background:#fff;border:1px solid #a5a5a5;border-top-color:#8a8a8a;"></div>
<div class="a" style="left:346px;top:283px;width:1px;height:14px;background:#000;"></div>
<div class="a" style="left:751px;top:281px;width:20px;height:18px;background:#d4d4d4;border:1px solid #bdbdbd;"></div>
<svg class="a" style="left:753px;top:283px" width="16" height="14" viewBox="0 0 16 14"><rect x="0.500" y="0.500" width="15" height="12" fill="#fff" stroke="#5a6a8a"/><rect x="1" y="1" width="14" height="3" fill="#3d6fd0"/><rect x="1" y="4" width="14" height="2" fill="#8fb0e8"/><path d="M6.500 6.500h3v3h2l-3.500 3.500-3.500-3.500h2z" fill="#e03020"/><path d="M1 12.500h14" stroke="#333"/></svg>
<svg class="a" style="left:768px;top:297px" width="10" height="10" viewBox="0 0 10 10"><path d="M1 10l9-9M4 10l6-6M7 10l3-3" stroke="#9a9a9a" stroke-width="1.200" fill="none"/></svg>
<svg class="a" style="left:380px;top:320px" width="340" height="190" viewBox="380 320 340 190">
<defs><filter id="sh" x="-20%" y="-20%" width="140%" height="150%"><feGaussianBlur stdDeviation="2.500"/></filter>
<clipPath id="mc"><path id="mb" d="M667.300 400.800c15 0 23.200 8 23.200 22 0 10-1.700 19-1.700 29 0 5 1.700 9 1.700 14 0 9-9.700 14.200-23.200 14.200s-23.200-5.200-23.200-14.200c0-5 1.700-9 1.700-14 0-10-1.700-19-1.700-29 0-14 8.200-22 23.200-22z"/></clipPath></defs>
<path d="M667.300 400.800c15 0 23.200 8 23.200 22 0 10-1.700 19-1.700 29 0 5 1.700 9 1.700 14 0 9-9.700 14.200-23.200 14.200s-23.200-5.200-23.200-14.200c0-5 1.700-9 1.700-14 0-10-1.700-19-1.700-29 0-14 8.200-22 23.200-22z" transform="translate(1,4)" fill="rgba(0,0,0,0.450)" filter="url(#sh)"/>
<g clip-path="url(#mc)"><rect x="640" y="398" width="56" height="86" fill="#808285"/><rect x="667.300" y="398" width="30" height="42" fill="#939598"/><rect x="640" y="398" width="27.300" height="42" fill="#2fc6a5"/><path d="M640 433c10 5 44 5 56 0v52h-56z" fill="#808285"/></g>
<rect x="666" y="410.300" width="2.800" height="11.400" rx="1.400" fill="#178069"/>
<path d="M667.300 400.800c15 0 23.200 8 23.200 22 0 10-1.700 19-1.700 29 0 5 1.700 9 1.700 14 0 9-9.700 14.200-23.200 14.200s-23.200-5.200-23.200-14.200c0-5 1.700-9 1.700-14 0-10-1.700-19-1.700-29 0-14 8.200-22 23.200-22z" fill="none" stroke="#545558" stroke-width="1.900"/>
<path d="M414.3 342.0 L437.9 365.6 L440.8 357.1 L656.2 431.8 A5.6 5.6 0 0 0 659.8 421.2 L444.5 346.5 L447.4 338.0 Z" transform="translate(2,4.500)" fill="rgba(0,0,0,0.400)" filter="url(#sh)"/>
<path d="M414.3 342.0 L437.9 365.6 L440.8 357.1 L656.2 431.8 A5.6 5.6 0 0 0 659.8 421.2 L444.5 346.5 L447.4 338.0 Z" fill="#f9434a"/>
<path d="M401.500 344.500h4v4.500h4.500v4h-4.500v4.500h-4v-4.500h-4.500v-4h4.500z" transform="translate(1.200,1.200)" fill="rgba(0,0,0,0.250)"/>
<path d="M401.500 344.500h4v4.500h4.500v4h-4.500v4.500h-4v-4.500h-4.500v-4h4.500z" fill="#fff" stroke="#000" stroke-width="1.500" stroke-linejoin="round"/>
</svg>
<div class="a" style="left:810px;top:201px;width:15px;height:461px;background:#dadada;"></div>
<div class="a" style="left:810px;top:201px;width:15px;height:14px;background:#fff;border:1px solid #b6b6b6;"></div>
<svg class="a" style="left:814px;top:205px" width="7" height="5" viewBox="0 0 7 5"><path d="M0 4.500h7l-3.500-4z" fill="#606060"/></svg>
<div class="a" style="left:810px;top:216px;width:15px;height:411px;background:#fff;border:1px solid #b6b6b6;"></div>
<div class="a" style="left:810px;top:647px;width:15px;height:15px;background:#fff;border:1px solid #b6b6b6;"></div>
<svg class="a" style="left:814px;top:652px" width="7" height="5" viewBox="0 0 7 5"><path d="M0 0.500h7l-3.500 4z" fill="#606060"/></svg>
<div class="a" style="left:101px;top:661px;width:60px;height:25px;background:#fff;border-bottom:2px solid #217346;border-left:1px solid #7a7a7a;border-right:1px solid #7a7a7a;"></div>
<span class="t" style="left:113px;top:666.0px;font-size:12.5px;line-height:16.5px;color:#217346;letter-spacing:-0.24px;font-weight:bold;">Лист1</span>
<div class="a" style="left:497px;top:666px;width:2px;height:2px;background:#a8a8a8;"></div>
<div class="a" style="left:497px;top:672px;width:2px;height:2px;background:#a8a8a8;"></div>
<div class="a" style="left:497px;top:678px;width:2px;height:2px;background:#a8a8a8;"></div>
<div class="a" style="left:514px;top:668px;width:293px;height:15px;background:#dadada;"></div>
<div class="a" style="left:514px;top:668px;width:15px;height:15px;background:#fff;border:1px solid #b6b6b6;"></div>
<svg class="a" style="left:519px;top:672px" width="5" height="7" viewBox="0 0 5 7"><path d="M4.500 0v7l-4-3.500z" fill="#606060"/></svg>
<div class="a" style="left:529px;top:668px;width:239px;height:15px;background:#fff;border:1px solid #b6b6b6;"></div>
<div class="a" style="left:792px;top:668px;width:15px;height:15px;background:#fff;border:1px solid #b6b6b6;"></div>
<svg class="a" style="left:797px;top:672px" width="5" height="7" viewBox="0 0 5 7"><path d="M0.500 0v7l4-3.500z" fill="#606060"/></svg>
<div class="a" style="left:1px;top:689px;width:827px;height:1px;background:#bdbdbd;"></div>
<div class="a" style="left:1px;top:690px;width:827px;height:21px;background:#f1f1f1;"></div>
<span class="t" style="left:9.5px;top:691.1px;font-size:12px;line-height:16px;color:#555;letter-spacing:-0.72px;">Ввод</span>
<span class="t" style="left:199px;top:691.1px;font-size:12px;line-height:16px;color:#555;letter-spacing:-0.60px;">Среднее: 472777,7778</span>
<span class="t" style="left:329px;top:691.1px;font-size:12px;line-height:16px;color:#555;letter-spacing:-0.42px;">Количество: 57</span>
<span class="t" style="left:426px;top:691.1px;font-size:12px;line-height:16px;color:#555;letter-spacing:-0.78px;">Сумма: 8510000</span>
<svg class="a" style="left:537px;top:692px" width="100" height="16" viewBox="537 692 100 16"><g fill="none" stroke="#666" stroke-width="1">
<path d="M538.500 693.500h12v12h-12zM538.500 697.500h12M538.500 701.500h12M542.500 693.500v12M546.500 693.500v12"/>
<path d="M576.500 693.500h13v12h-13z"/><path d="M579.500 696.500h7v6h-7zM581 698.500h4M581 700.500h4"/>
<path d="M614.500 693.500h13v12h-13z"/><path d="M618.500 693.500v7h5v-7"/></g></svg>
<div class="a" style="left:643px;top:699px;width:7px;height:2px;background:#a0a0a0;"></div>
<div class="a" style="left:654px;top:699px;width:100px;height:1px;background:#b4b4b4;"></div>
<div class="a" style="left:704px;top:696px;width:1px;height:7px;background:#b4b4b4;"></div>
<div class="a" style="left:758px;top:699px;width:9px;height:2px;background:#a0a0a0;"></div>
<div class="a" style="left:761px;top:695.5px;width:2px;height:9px;background:#a0a0a0;"></div>
<span class="t" style="left:782.5px;top:691.1px;font-size:12px;line-height:16px;color:#b2b2b2;letter-spacing:-1.20px;">100%</span>
<svg class="a" style="left:18px;top:632px" width="260" height="64" viewBox="18 632 260 64">
<rect x="22.500" y="638.200" width="60" height="47.500" rx="4.500" fill="rgba(255,255,255,0.350)" stroke="#c4c4c4" stroke-width="1"/>
<rect x="23.700" y="639.400" width="57.600" height="45.100" rx="3.800" fill="none" stroke="rgba(255,255,255,0.700)" stroke-width="1.200"/>
<rect x="26.200" y="641.500" width="52.800" height="40.700" rx="4" fill="none" stroke="#bdbdbd" stroke-width="2.400"/>
<path d="M41.500 690v-2.500q0-1.500 1.500-1.500h16q1.500 0 1.500 1.500v2.500" fill="none" stroke="#cfcfcf" stroke-width="1.100"/>
<path d="M36 651.500l16 15" stroke="#b2b2b2" stroke-width="3.200" stroke-linecap="round"/><path d="M30 645.500l15 5.300-9.800 7.400z" fill="#b2b2b2"/>
<path d="M32 671l-3.500 3.500 3.500 3.500zM57 671l3.500 3.500-3.500 3.500z" fill="#d2d2d2"/>
<g opacity="0.430"><text x="90.500" y="672.400" textLength="48.500" lengthAdjust="spacingAndGlyphs" font-family="Liberation Sans,sans-serif" font-weight="bold" font-size="30.800" fill="#f0485e" stroke="#f0485e" stroke-width="1.600">OS</text></g>
<g opacity="0.620"><text x="151" y="672.400" textLength="115" lengthAdjust="spacingAndGlyphs" font-family="Liberation Sans,sans-serif" font-weight="bold" font-size="30.800" fill="#fff" stroke="#9c9c9c" stroke-width="2.200" paint-order="stroke">Helper</text></g>
</svg>
<svg class="a" style="left:194px;top:667px" width="16" height="16" viewBox="0 0 16 16"><circle cx="8" cy="8" r="6.500" fill="none" stroke="#8a8a8a" stroke-width="1.200"/><path d="M8 4.500v7M4.500 8h7" stroke="#707070" stroke-width="1.500"/></svg>
</body></html>
